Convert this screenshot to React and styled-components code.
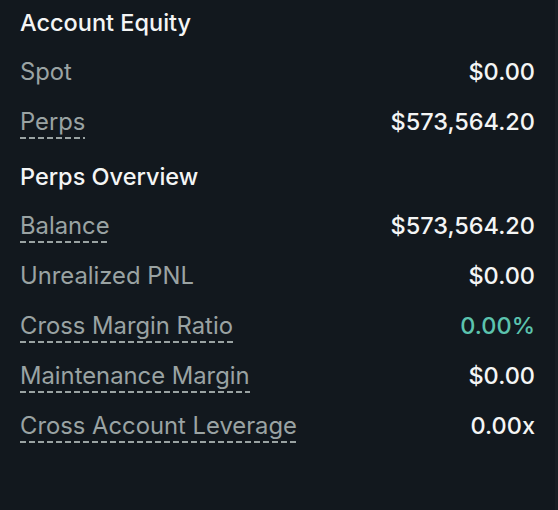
import React from "react";
import styled, { createGlobalStyle } from "styled-components";

const GlobalStyle = createGlobalStyle`
  html, body {
    margin: 0;
    padding: 0;
    background: #12181e;
  }
  body {
    font-family: Inter, "Noto Sans", sans-serif;
  }
`;

const Panel = styled.div`
  box-sizing: border-box;
  width: 558px;
  height: 510px;
  padding: 0 20px 0 20px;
  background: #12181e;
  border-right: 3px solid #181e24;
`;

const Section = styled.div`
  display: flex;
  flex-direction: column;
`;

const Heading = styled.div`
  height: 44px;
  display: flex;
  align-items: center;
  font-size: 23.5px;
  font-weight: 500;
  color: #f4f5f5;
  margin-top: ${(p) => (p.$first ? "0" : "7px")};
  margin-bottom: 3px;
`;

const Row = styled.div`
  height: 50px;
  display: flex;
  align-items: center;
  justify-content: space-between;
`;

const Label = styled.span`
  color: #9aa3a3;
  font-size: 23.8px;
  line-height: 28px;
  padding-bottom: 3px;
  margin-bottom: -3px;
  background-image: ${(p) =>
    p.$tip
      ? "repeating-linear-gradient(90deg, #9aa3a3 0 6px, transparent 6px 9px)"
      : "none"};
  background-size: 100% 2px;
  background-position: 0 100%;
  background-repeat: no-repeat;
`;

const Value = styled.span`
  color: ${(p) => (p.$accent ? "#5cc3ae" : "#f4f5f5")};
  font-size: 23.5px;
  line-height: 28px;
  font-weight: 500;
`;

const equity = [
  { label: "Spot", value: "$0.00" },
  { label: "Perps", value: "$573,564.20", tip: true },
];

const overview = [
  { label: "Balance", value: "$573,564.20", tip: true },
  { label: "Unrealized PNL", value: "$0.00" },
  { label: "Cross Margin Ratio", value: "0.00%", tip: true, accent: true },
  { label: "Maintenance Margin", value: "$0.00", tip: true },
  { label: "Cross Account Leverage", value: "0.00x", tip: true },
];

const Rows = ({ items }) =>
  items.map((r) => (
    <Row key={r.label}>
      <Label $tip={r.tip}>{r.label}</Label>
      <Value $accent={r.accent}>{r.value}</Value>
    </Row>
  ));

export default function App() {
  return (
    <>
      <GlobalStyle />
      <Panel>
        <Section>
          <Heading $first>Account Equity</Heading>
          <Rows items={equity} />
        </Section>
        <Section>
          <Heading>Perps Overview</Heading>
          <Rows items={overview} />
        </Section>
      </Panel>
    </>
  );
}
